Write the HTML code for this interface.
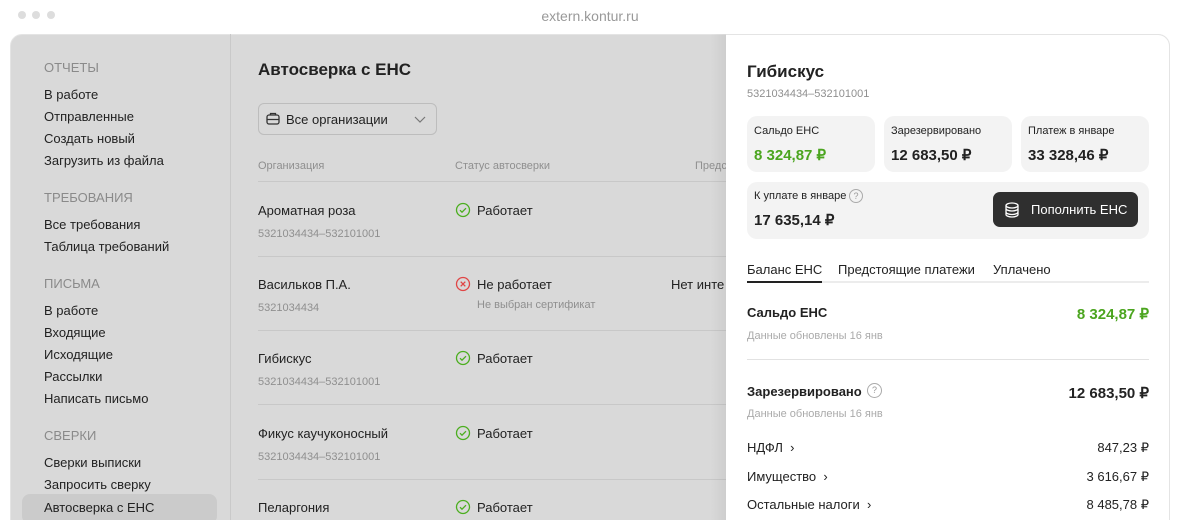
<!DOCTYPE html>
<html><head><meta charset="utf-8"><style>
*{margin:0;padding:0;box-sizing:border-box}
html,body{width:1180px;height:520px;overflow:hidden}
body{background:#fff;font-family:"Liberation Sans",sans-serif;position:relative;color:#222}
.a{position:absolute;white-space:nowrap}
.win{position:absolute;left:10px;top:34px;width:1160px;height:500px;border-radius:12px;background:#d9d9d9;overflow:hidden;border:1px solid #e4e4e4}
.sb{font-size:13px;color:#222}
.sh{font-size:13px;color:#8a8a8a}
.g{color:#8f8f8f;font-size:11px}
.hr{position:absolute;height:1px;background:#c8c8c8}
.card{position:absolute;background:#f3f3f3;border-radius:10px}
</style></head><body>
<div class="a" style="left:18px;top:11px;width:8px;height:8px;border-radius:50%;background:#ddd"></div>
<div class="a" style="left:32px;top:11px;width:8px;height:8px;border-radius:50%;background:#ddd"></div>
<div class="a" style="left:47px;top:11px;width:8px;height:8px;border-radius:50%;background:#ddd"></div>
<div class="a" style="left:0;width:1180px;top:8px;text-align:center;font-size:14px;color:#999">extern.kontur.ru</div>
<div class="win"></div>
<div class="a" style="left:230px;top:34px;width:1px;height:486px;background:#c9c9c9"></div>
<div class="a" style="left:22px;top:494px;width:195px;height:30px;border-radius:8px;background:#cbcbcb"></div>
<div class="a sh" style="left:44px;top:60px">ОТЧЕТЫ</div>
<div class="a sb" style="left:44px;top:87px">В работе</div>
<div class="a sb" style="left:44px;top:109px">Отправленные</div>
<div class="a sb" style="left:44px;top:131px">Создать новый</div>
<div class="a sb" style="left:44px;top:153px">Загрузить из файла</div>
<div class="a sh" style="left:44px;top:190px">ТРЕБОВАНИЯ</div>
<div class="a sb" style="left:44px;top:217px">Все требования</div>
<div class="a sb" style="left:44px;top:239px">Таблица требований</div>
<div class="a sh" style="left:44px;top:276px">ПИСЬМА</div>
<div class="a sb" style="left:44px;top:303px">В работе</div>
<div class="a sb" style="left:44px;top:325px">Входящие</div>
<div class="a sb" style="left:44px;top:347px">Исходящие</div>
<div class="a sb" style="left:44px;top:369px">Рассылки</div>
<div class="a sb" style="left:44px;top:391px">Написать письмо</div>
<div class="a sh" style="left:44px;top:428px">СВЕРКИ</div>
<div class="a sb" style="left:44px;top:455px">Сверки выписки</div>
<div class="a sb" style="left:44px;top:477px">Запросить сверку</div>
<div class="a sb" style="left:44px;top:500px">Автосверка с ЕНС</div>

<div class="a" style="left:258px;top:60px;font-size:17px;font-weight:bold">Автосверка с ЕНС</div>
<div class="a" style="left:258px;top:103px;width:179px;height:32px;border:1px solid #bdbdbd;border-radius:6px"></div>
<svg class="a" style="left:265px;top:111px" width="16" height="16" viewBox="0 0 16 16" fill="none" stroke="#333" stroke-width="1.3"><rect x="2" y="4" width="12" height="9" rx="2"/><path d="M5.5 4V2.5h5V4M2 8.5h12"/></svg>
<div class="a sb" style="left:286px;top:112px">Все организации</div>
<svg class="a" style="left:413px;top:114px" width="14" height="10"><path d="M2 3l5 5 5-5" stroke="#777" fill="none" stroke-width="1.2"/></svg>
<div class="a g" style="left:258px;top:160px">Организация</div>
<div class="a g" style="left:455px;top:160px">Статус автосверки</div>
<div class="a g" style="left:695px;top:160px">Предс</div>
<div class="hr" style="left:258px;width:470px;top:181px"></div>
<div class="hr" style="left:258px;width:470px;top:256px"></div>
<div class="hr" style="left:258px;width:470px;top:330px"></div>
<div class="hr" style="left:258px;width:470px;top:404px"></div>
<div class="hr" style="left:258px;width:470px;top:479px"></div>

<div class="a sb" style="left:258px;top:203px">Ароматная роза</div>
<div class="a g" style="left:258px;top:228px">5321034434–532101001</div>
<svg class="a" style="left:455px;top:202px" width="16" height="16" viewBox="0 0 16 16" fill="none" stroke="#4bae1f" stroke-width="1.3"><circle cx="8" cy="8" r="6.5"/><path d="M5 8.2l2 2 4-4"/></svg>
<div class="a sb" style="left:477px;top:203px">Работает</div>
<div class="a sb" style="left:258px;top:277px">Васильков П.А.</div>
<div class="a g" style="left:258px;top:302px">5321034434</div>
<svg class="a" style="left:455px;top:276px" width="16" height="16" viewBox="0 0 16 16" fill="none" stroke="#e04545" stroke-width="1.3"><circle cx="8" cy="8" r="6.5"/><path d="M5.7 5.7l4.6 4.6M10.3 5.7l-4.6 4.6"/></svg>
<div class="a sb" style="left:477px;top:277px">Не работает</div>
<div class="a g" style="left:477px;top:299px">Не выбран сертификат</div>
<div class="a sb" style="left:671px;top:277px">Нет инте</div>
<div class="a sb" style="left:258px;top:351px">Гибискус</div>
<div class="a g" style="left:258px;top:376px">5321034434–532101001</div>
<svg class="a" style="left:455px;top:350px" width="16" height="16" viewBox="0 0 16 16" fill="none" stroke="#4bae1f" stroke-width="1.3"><circle cx="8" cy="8" r="6.5"/><path d="M5 8.2l2 2 4-4"/></svg>
<div class="a sb" style="left:477px;top:351px">Работает</div>
<div class="a sb" style="left:258px;top:426px">Фикус каучуконосный</div>
<div class="a g" style="left:258px;top:451px">5321034434–532101001</div>
<svg class="a" style="left:455px;top:425px" width="16" height="16" viewBox="0 0 16 16" fill="none" stroke="#4bae1f" stroke-width="1.3"><circle cx="8" cy="8" r="6.5"/><path d="M5 8.2l2 2 4-4"/></svg>
<div class="a sb" style="left:477px;top:426px">Работает</div>
<div class="a sb" style="left:258px;top:500px">Пеларгония</div>
<svg class="a" style="left:455px;top:499px" width="16" height="16" viewBox="0 0 16 16" fill="none" stroke="#4bae1f" stroke-width="1.3"><circle cx="8" cy="8" r="6.5"/><path d="M5 8.2l2 2 4-4"/></svg>
<div class="a sb" style="left:477px;top:500px">Работает</div>

<div class="a" style="left:710px;top:34px;width:18px;height:486px;background:linear-gradient(90deg,rgba(0,0,0,0),rgba(0,0,0,0.06))"></div>
<div class="a" style="left:726px;top:34px;width:444px;height:490px;background:#fff;border-radius:0 12px 0 0;border-top:1px solid #e4e4e4;border-right:1px solid #e4e4e4"></div>

<div class="a" style="left:747px;top:62px;font-size:17px;font-weight:bold">Гибискус</div>
<div class="a g" style="left:747px;top:88px">5321034434–532101001</div>
<div class="card" style="left:747px;top:116px;width:128px;height:56px"></div>
<div class="card" style="left:884px;top:116px;width:128px;height:56px"></div>
<div class="card" style="left:1021px;top:116px;width:128px;height:56px"></div>
<div class="a" style="left:754px;top:125px;font-size:11px">Сальдо ЕНС</div>
<div class="a" style="left:754px;top:146px;font-size:15px;font-weight:bold;color:#4ba51f">8 324,87 ₽</div>
<div class="a" style="left:891px;top:125px;font-size:11px">Зарезервировано</div>
<div class="a" style="left:891px;top:146px;font-size:15px;font-weight:bold">12 683,50 ₽</div>
<div class="a" style="left:1028px;top:125px;font-size:11px">Платеж в январе</div>
<div class="a" style="left:1028px;top:146px;font-size:15px;font-weight:bold">33 328,46 ₽</div>
<div class="card" style="left:747px;top:182px;width:402px;height:57px"></div>
<div class="a" style="left:754px;top:190px;font-size:11px">К уплате в январе</div>
<div class="a" style="left:849px;top:189px;width:14px;height:14px;border:1px solid #aaa;border-radius:50%;font-size:9px;color:#999;text-align:center;line-height:12px">?</div>
<div class="a" style="left:754px;top:211px;font-size:15px;font-weight:bold">17 635,14 ₽</div>
<div class="a" style="left:993px;top:192px;width:145px;height:35px;background:#2f2f2f;border-radius:7px"></div>
<svg class="a" style="left:1003px;top:201px" width="18" height="18" viewBox="0 0 18 18" fill="none" stroke="#fff" stroke-width="1.3"><ellipse cx="9" cy="4.5" rx="6" ry="2.5"/><path d="M3 4.5v3c0 1.4 2.7 2.5 6 2.5s6-1.1 6-2.5v-3M3 8v3c0 1.4 2.7 2.5 6 2.5s6-1.1 6-2.5V8M3 11.5v2c0 1.4 2.7 2.5 6 2.5s6-1.1 6-2.5v-2"/></svg>
<div class="a" style="left:1031px;top:202px;font-size:13px;color:#fff">Пополнить ЕНС</div>

<div class="a sb" style="left:747px;top:262px">Баланс ЕНС</div>
<div class="a sb" style="left:838px;top:262px">Предстоящие платежи</div>
<div class="a sb" style="left:993px;top:262px">Уплачено</div>
<div class="a" style="left:747px;top:281px;width:402px;height:2px;background:#ececec"></div>
<div class="a" style="left:747px;top:281px;width:75px;height:2px;background:#222"></div>

<div class="a" style="left:747px;top:305px;font-size:13px;font-weight:bold">Сальдо ЕНС</div>
<div class="a" style="left:747px;top:330px;font-size:11px;color:#aaa">Данные обновлены 16 янв</div>
<div class="a" style="right:31px;top:305px;font-size:15px;font-weight:bold;color:#4ba51f">8 324,87 ₽</div>
<div class="a" style="left:747px;top:359px;width:402px;height:1px;background:#e2e2e2"></div>
<div class="a" style="left:747px;top:384px;font-size:13px;font-weight:bold">Зарезервировано</div>
<div class="a" style="left:867px;top:383px;width:15px;height:15px;border:1px solid #aaa;border-radius:50%;font-size:9px;color:#999;text-align:center;line-height:13px">?</div>
<div class="a" style="right:31px;top:384px;font-size:15px;font-weight:bold">12 683,50 ₽</div>
<div class="a" style="left:747px;top:408px;font-size:11px;color:#aaa">Данные обновлены 16 янв</div>
<div class="a sb" style="left:747px;top:440px">НДФЛ &nbsp;›</div>
<div class="a sb" style="right:31px;top:440px">847,23 ₽</div>
<div class="a sb" style="left:747px;top:469px">Имущество &nbsp;›</div>
<div class="a sb" style="right:31px;top:469px">3 616,67 ₽</div>
<div class="a sb" style="left:747px;top:497px">Остальные налоги &nbsp;›</div>
<div class="a sb" style="right:31px;top:497px">8 485,78 ₽</div>
</body></html>
